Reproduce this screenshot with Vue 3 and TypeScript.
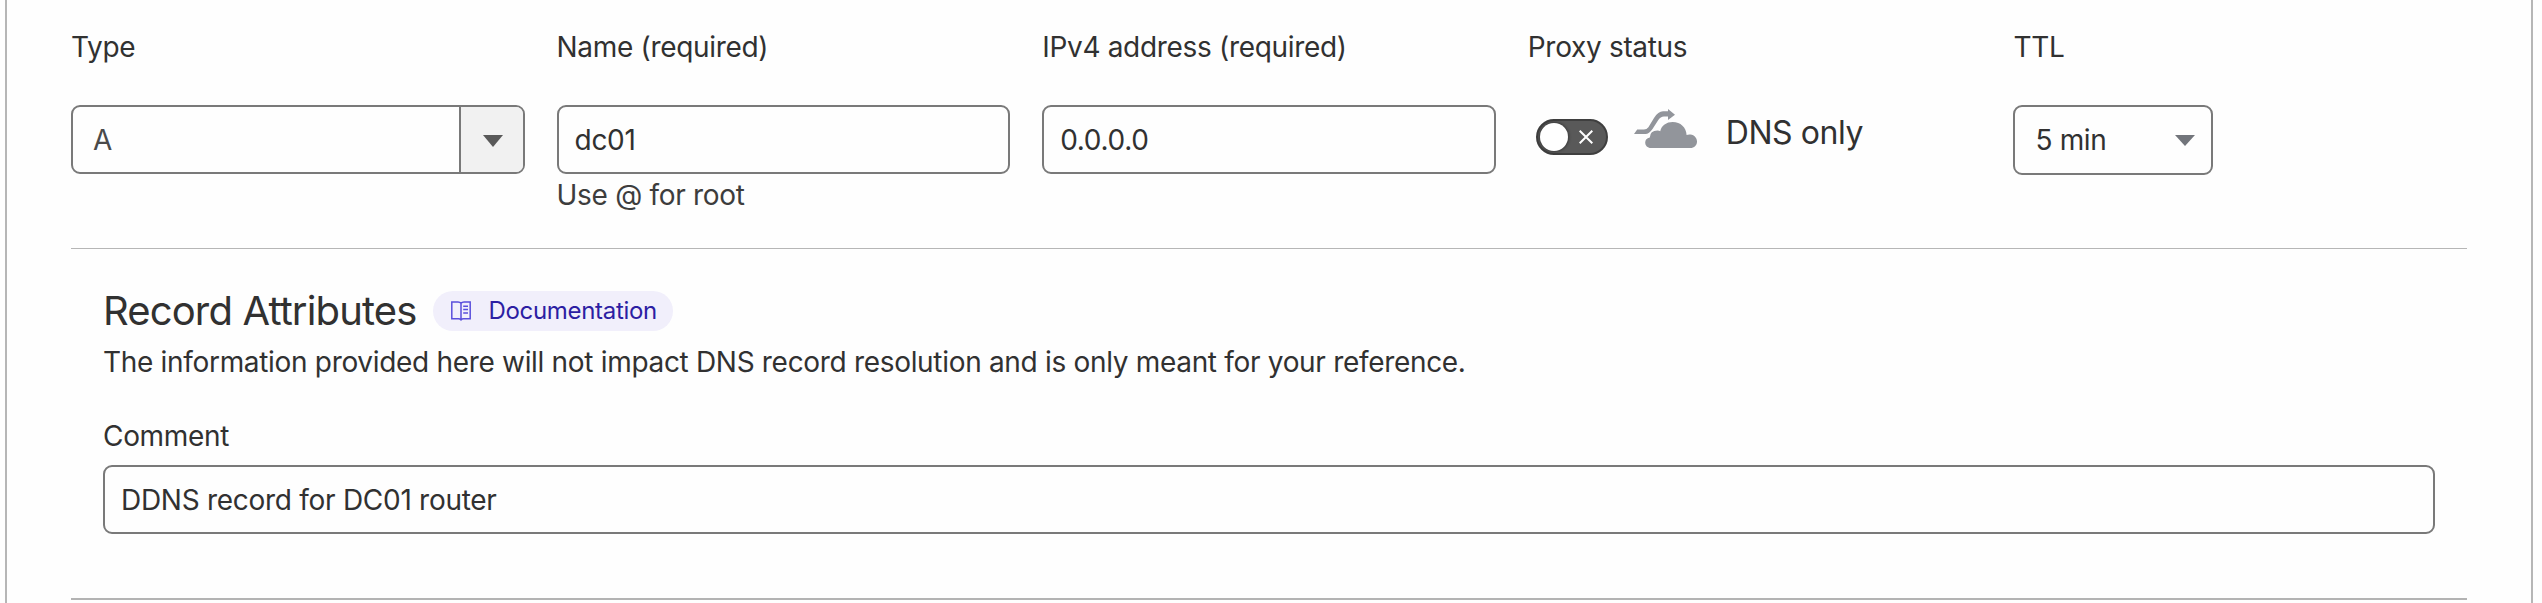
<script setup lang="ts">
import { ref } from 'vue'

const recordName = ref('dc01')
const address = ref('0.0.0.0')
const comment = ref('DDNS record for DC01 router')
const proxied = ref(false)
</script>

<template>
  <main class="panel">
    <section class="fields">
      <div class="field">
        <label class="label">Type</label>
        <div class="control combo">
          <span class="combo-value">A</span>
          <button class="combo-button" type="button" aria-label="Open type list">
            <svg width="20" height="12" viewBox="0 0 20 12"><path d="M0 0H20L10 12Z" fill="#595959" /></svg>
          </button>
        </div>
      </div>
      <div class="field">
        <label class="label">Name (required)</label>
        <input v-model="recordName" class="control" type="text" />
        <p class="hint">Use @ for root</p>
      </div>
      <div class="field">
        <label class="label">IPv4 address (required)</label>
        <input v-model="address" class="control" type="text" />
      </div>
      <div class="field">
        <label class="label">Proxy status</label>
        <div class="proxy">
          <button class="switch" type="button" role="switch" :aria-checked="proxied" @click="proxied = !proxied">
            <span class="knob"></span>
            <svg class="cross" width="14" height="14" viewBox="0 0 14 14">
              <path d="M.7.7 13.3 13.3M13.3.7.7 13.3" stroke="#fff" stroke-width="2" />
            </svg>
          </button>
          <svg class="cloud" width="63" height="40" viewBox="0 0 63 40" fill="#92959b">
            <path d="M0 25 3.2 20.6H10Q12.7 20.6 14.4 18.2L20 9Q24.2 2.3 29 2.3H34V0L41 5.8 34 11V7.5H30Q26.500 7.5 24.300 11L18.500 20Q15 25 11.500 25Z" />
            <path d="M17 39C13.500 39 11.200 36.500 11.200 33.500Q11.200 29.500 15.800 28.500Q16 21.500 23.500 21.500Q25.200 21.500 26.200 22.300C27.500 16.500 32.500 13.100 38.700 13.100C46.500 13.100 52.300 18.500 52.600 26Q54.500 25.200 56.500 25.500C60.500 26 63 29 63 32.500C63 36.500 60 39 56.500 39Z" />
          </svg>
          <span class="proxy-text">DNS only</span>
        </div>
      </div>
      <div class="field">
        <label class="label">TTL</label>
        <div class="control ttl">
          <span>5 min</span>
          <svg width="20" height="11" viewBox="0 0 20 11"><path d="M0 0H20L10 11Z" fill="#72757b" /></svg>
        </div>
      </div>
    </section>

    <section class="attributes">
      <div class="heading-row">
        <h2 class="heading">Record Attributes</h2>
        <a class="badge">
          <svg width="20" height="20" viewBox="0 0 20 20" fill="none" stroke="#5a4fdc" stroke-width="1.500">
            <path d="M10 2.300Q9 1 7 1H.8V17.700H7.500Q9.300 17.700 10 18.700Q10.700 17.700 12.500 17.700H19.200V1H13Q11 1 10 2.300ZM10 2.300V19.500" />
            <path d="M12.200 5.200H17M12.200 8.600H17M12.200 12H17" />
          </svg>
          <span>Documentation</span>
        </a>
      </div>
      <p class="description">The information provided here will not impact DNS record resolution and is only meant for your reference.</p>
      <label class="comment-label">Comment</label>
      <input v-model="comment" class="control comment-input" type="text" />
    </section>
  </main>
</template>

<style>
body {
  margin: 0;
  background: #fefefe;
}
</style>

<style scoped>
* {
  box-sizing: border-box;
}

.panel {
  height: 603px;
  margin: 0 9px 0 5px;
  padding: 0 64px;
  overflow: hidden;
  border: solid #b6b6b6;
  border-width: 0 2px;
  color: #313131;
  font: 400 28px/42px Inter, sans-serif;
  letter-spacing: -0.315px;
}

.fields {
  display: grid;
  grid-template-columns: repeat(5, minmax(0, 1fr));
  gap: 32px;
  height: 249px;
  padding-top: 26px;
  border-bottom: 1px solid #b6b6b6;
}

.label {
  display: block;
  height: 42px;
  margin-bottom: 37px;
}

.control {
  display: block;
  width: 100%;
  height: 69px;
  padding: 1px 16px 0;
  border: 2px solid #797979;
  border-radius: 9px;
  outline: 0;
  background: #fefefe;
  color: #313131;
  font: inherit;
  letter-spacing: inherit;
}

.comment-input {
  letter-spacing: -0.28px;
}

.combo {
  display: flex;
  padding: 0;
  overflow: hidden;
}

.combo-value {
  flex: 1;
  padding: 12px 20px 0;
  color: #4a4a4a;
}

.combo-button {
  display: flex;
  align-items: center;
  justify-content: center;
  width: 64px;
  padding: 3px 0 0 2px;
  border: 0;
  border-left: 2px solid #797979;
  background: #f1f1f1;
}

.hint {
  margin: 0;
  color: #3d3d3d;
}

.proxy {
  display: flex;
  padding-left: 8px;
}

.switch {
  display: flex;
  align-items: center;
  justify-content: space-between;
  width: 72px;
  height: 36px;
  margin-top: 14px;
  padding: 0 13px 0 2px;
  border: 2px solid #3f3f3f;
  border-radius: 18px;
  background: #595959;
}

.knob {
  width: 28px;
  height: 28px;
  border-radius: 50%;
  background: #fff;
  box-shadow: 0 0 3px 1px rgba(0, 0, 0, 0.35);
}

.cloud {
  margin: 4px 0 0 26px;
}

.proxy-text {
  margin: 4px 0 0 29px;
  font-size: 32px;
  line-height: 48px;
  letter-spacing: -0.45px;
}

.ttl {
  display: flex;
  align-items: center;
  justify-content: space-between;
  width: 200px;
  height: 70px;
  padding: 0 16px 0 20px;
}

.attributes {
  height: 351px;
  padding: 38px 32px 0;
  border-bottom: 2px solid #b3b3b3;
}

.heading-row {
  display: flex;
  align-items: center;
  gap: 16px;
  height: 48px;
}

.heading {
  margin: 0;
  font-size: 40px;
  font-weight: 400;
  line-height: 48px;
  letter-spacing: -0.86px;
}

.badge {
  display: flex;
  align-items: center;
  gap: 18px;
  height: 40px;
  padding: 0 16px 0 18px;
  border-radius: 20px;
  background: #f1effb;
  color: #2c1ea3;
  font-size: 24px;
  line-height: 36px;
}

.description {
  margin: 6px 0 32px;
}

.comment-label {
  display: block;
  height: 42px;
  margin-bottom: 8px;
}
</style>
